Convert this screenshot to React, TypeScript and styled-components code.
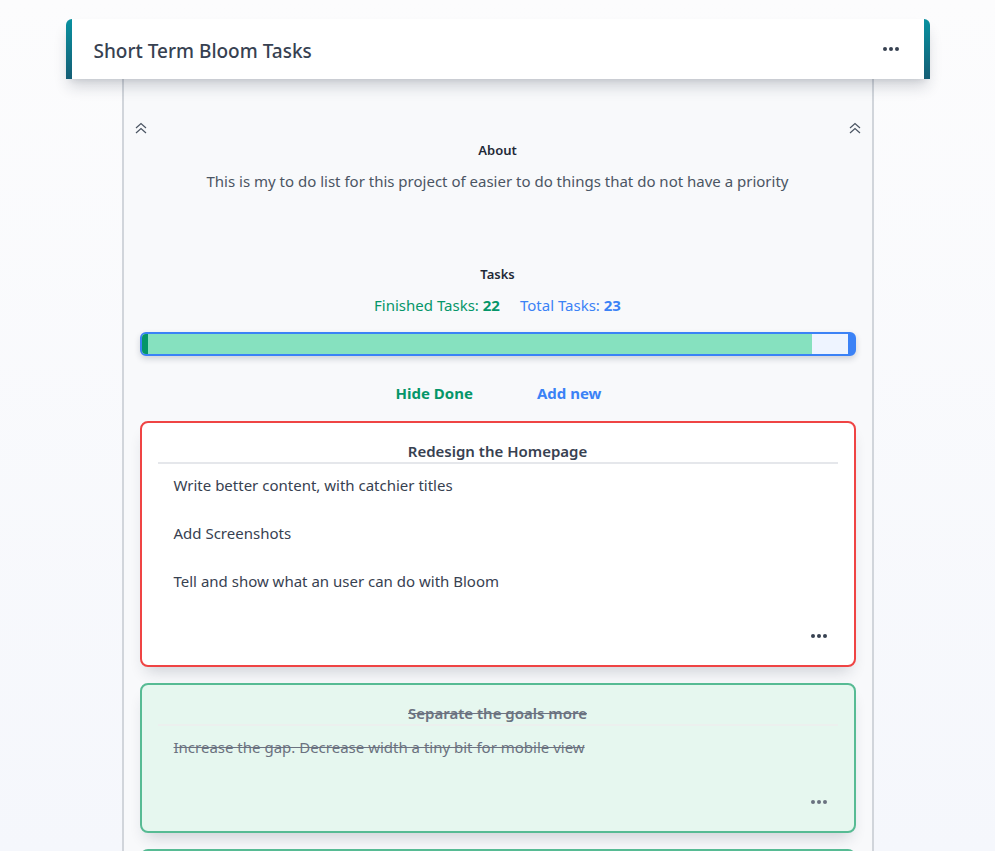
import React from "react";
import styled, { createGlobalStyle, css } from "styled-components";

const GlobalStyle = createGlobalStyle`
  html, body {
    margin: 0;
    padding: 0;
  }
  body {
    font-family: "Noto Sans", "Open Sans", sans-serif;
    background: linear-gradient(180deg, #fcfcfd 0%, #f5f7fc 100%);
    min-height: 100vh;
    color: #374151;
  }
`;

const Page = styled.div`
  display: flex;
  flex-direction: column;
  align-items: center;
  padding-top: 19px;
  height: 832px;
  overflow: hidden;
`;

const Header = styled.header`
  position: relative;
  z-index: 2;
  flex-shrink: 0;
  box-sizing: border-box;
  width: 864px;
  height: 60px;
  display: flex;
  align-items: center;
  justify-content: space-between;
  padding: 0 30px 0 28px;
  background:
    linear-gradient(180deg, #0891a0, #155e75) left top / 6px 100% no-repeat,
    linear-gradient(180deg, #0891a0, #155e75) right top / 6px 100% no-repeat,
    #ffffff;
  border-radius: 6px 6px 0 0;
  box-shadow: 0 10px 15px -3px rgba(30, 41, 59, 0.2), 0 4px 6px -4px rgba(30, 41, 59, 0.12);
`;

const Title = styled.h1`
  margin: 3px 0 0;
  font-size: 19px;
  font-weight: 500;
  color: #374151;
`;

const Panel = styled.main`
  box-sizing: border-box;
  width: 752px;
  flex: 1;
  background: #f8f9fb;
  border-left: 2px solid #d1d5db;
  border-right: 2px solid #d1d5db;
  padding: 0 16px;
`;

const ChevronRow = styled.div`
  display: flex;
  justify-content: space-between;
  margin: 42px -6px 0;
  height: 14px;
`;

const SectionLabel = styled.div`
  text-align: center;
  font-size: 13px;
  font-weight: 600;
  color: #1f2937;
  margin-top: 6px;
`;

const Description = styled.p`
  margin: 12px 0 0;
  text-align: center;
  font-size: 15px;
  color: #4b5563;
`;

const TasksLabel = styled(SectionLabel)`
  margin-top: 74px;
`;

const Stats = styled.div`
  display: flex;
  justify-content: center;
  gap: 20px;
  margin-top: 12px;
  font-size: 15px;
`;

const Stat = styled.span<{ $tone: "green" | "blue" }>`
  color: ${({ $tone }) => ($tone === "green" ? "#059669" : "#3b82f6")};
  b {
    font-weight: 700;
  }
`;

const Bar = styled.div`
  box-sizing: border-box;
  margin-top: 17px;
  height: 24px;
  display: flex;
  border: 2px solid #3b82f6;
  border-right-width: 8px;
  border-radius: 6px;
  background: #eef4ff;
  overflow: hidden;
  box-shadow: 0 3px 6px rgba(30, 41, 59, 0.18);
`;

const BarFill = styled.div`
  box-sizing: border-box;
  height: 100%;
  background: #86e1bf;
  border-left: 6px solid #059669;
`;

const Actions = styled.div`
  display: flex;
  justify-content: center;
  gap: 64px;
  margin-top: 27px;
  padding-left: 2px;
`;

const ActionButton = styled.button<{ $tone: "green" | "blue" }>`
  border: 0;
  background: none;
  padding: 0;
  font-family: inherit;
  font-size: 15px;
  font-weight: 700;
  cursor: pointer;
  color: ${({ $tone }) => ($tone === "green" ? "#059669" : "#3b82f6")};
`;

const CardList = styled.div`
  display: flex;
  flex-direction: column;
  gap: 16px;
  margin-top: 18px;
`;

const Card = styled.section<{ $done?: boolean }>`
  box-sizing: border-box;
  border: 2px solid #ef4444;
  border-radius: 8px;
  background: #ffffff;
  padding: 18px 16px 26px;
  box-shadow: 0 10px 16px -6px rgba(30, 41, 59, 0.2);
  ${({ $done }) =>
    $done &&
    css`
      border-color: #57bb94;
      background: #e6f7ef;
    `}
`;

const CardTitle = styled.h2<{ $done?: boolean }>`
  margin: 0;
  text-align: center;
  font-size: 15px;
  font-weight: 600;
  color: #374151;
  padding-bottom: 1px;
  border-bottom: 2px solid #e5e7eb;
  ${({ $done }) =>
    $done &&
    css`
      color: #6b7280;
      text-decoration: line-through;
      border-bottom-color: #ecf0ee;
    `}
`;

const Items = styled.ul`
  list-style: none;
  margin: 11px 0 0;
  padding: 0 16px;
  display: flex;
  flex-direction: column;
  gap: 27px;
`;

const Item = styled.li<{ $done?: boolean }>`
  font-size: 15px;
  line-height: 21px;
  color: #374151;
  ${({ $done }) =>
    $done &&
    css`
      color: #6b7280;
      text-decoration: line-through;
    `}
`;

const CardFooter = styled.div`
  display: flex;
  justify-content: flex-end;
  padding-right: 10px;
  margin-top: 41px;
`;

const IconButton = styled.button`
  border: 0;
  background: none;
  padding: 0;
  display: flex;
  cursor: pointer;
`;

const Dots: React.FC<{ color?: string }> = ({ color = "#374151" }) => (
  <svg width="18" height="6" viewBox="0 0 18 6">
    <circle cx="3" cy="3" r="2" fill={color} />
    <circle cx="9" cy="3" r="2" fill={color} />
    <circle cx="15" cy="3" r="2" fill={color} />
  </svg>
);

const ChevronsUp: React.FC = () => (
  <svg width="14" height="14" viewBox="0 0 14 14" fill="none" stroke="#4b5563" strokeWidth="1.2">
    <path d="M2 7 L7 2.5 L12 7" />
    <path d="M2 12 L7 7.5 L12 12" />
  </svg>
);

type Task = { title: string; items: string[]; done?: boolean };

const tasks: Task[] = [
  {
    title: "Redesign the Homepage",
    items: [
      "Write better content, with catchier titles",
      "Add Screenshots",
      "Tell and show what an user can do with Bloom",
    ],
  },
  {
    title: "Separate the goals more",
    items: ["Increase the gap. Decrease width a tiny bit for mobile view"],
    done: true,
  },
  { title: "Improve loading states", items: [], done: true },
];

const finished = 22;
const total = 23;

const App: React.FC = () => (
  <>
    <GlobalStyle />
    <Page>
      <Header>
        <Title>Short Term Bloom Tasks</Title>
        <IconButton aria-label="menu">
          <Dots />
        </IconButton>
      </Header>
      <Panel>
        <ChevronRow>
          <ChevronsUp />
          <ChevronsUp />
        </ChevronRow>
        <SectionLabel>About</SectionLabel>
        <Description>
          This is my to do list for this project of easier to do things that do not have a priority
        </Description>

        <TasksLabel>Tasks</TasksLabel>
        <Stats>
          <Stat $tone="green">
            Finished Tasks: <b>{finished}</b>
          </Stat>
          <Stat $tone="blue">
            Total Tasks: <b>{total}</b>
          </Stat>
        </Stats>
        <Bar>
          <BarFill style={{ width: `${Math.floor((finished / total) * 100)}%` }} />
        </Bar>
        <Actions>
          <ActionButton $tone="green">Hide Done</ActionButton>
          <ActionButton $tone="blue">Add new</ActionButton>
        </Actions>

        <CardList>
          {tasks.map((task) => (
            <Card key={task.title} $done={task.done}>
              <CardTitle $done={task.done}>{task.title}</CardTitle>
              <Items>
                {task.items.map((item) => (
                  <Item key={item} $done={task.done}>
                    {item}
                  </Item>
                ))}
              </Items>
              <CardFooter>
                <IconButton aria-label="task menu">
                  <Dots color={task.done ? "#6b7280" : "#374151"} />
                </IconButton>
              </CardFooter>
            </Card>
          ))}
        </CardList>
      </Panel>
    </Page>
  </>
);

export default App;
